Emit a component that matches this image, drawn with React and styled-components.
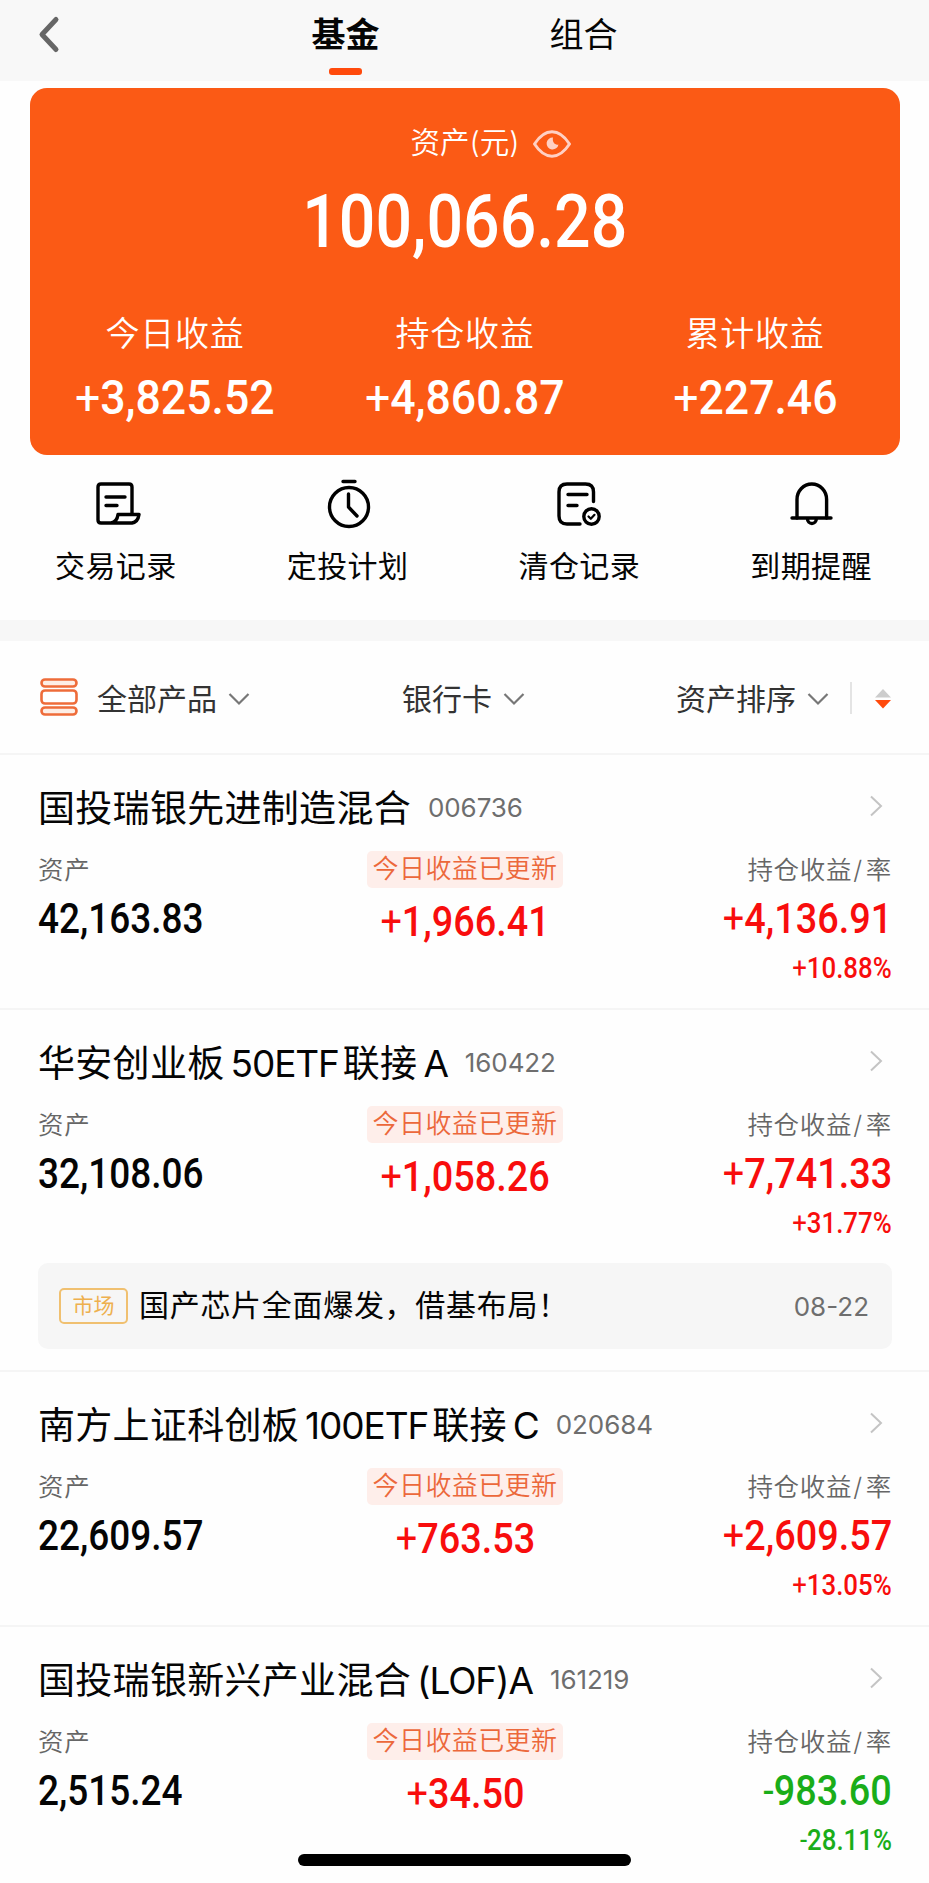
import React from 'react';
import styled, { createGlobalStyle } from 'styled-components';

const colors = {
  orange: '#fb5a15',
  accent: '#ff4a0c',
  red: '#f80d0d',
  green: '#1aad19',
  black: '#050505',
  dark: '#333',
  grey: '#6e6e6e',
  line: '#f5f5f5',
  panel: '#f7f7f7',
};

const textFont = `Inter, 'Noto Sans CJK SC', sans-serif`;
const numFont = `Roboto, 'Noto Sans CJK SC', sans-serif`;

const GlobalStyle = createGlobalStyle`
  * {
    box-sizing: border-box;
  }

  body {
    margin: 0;
    background: #fff;
    font-family: ${textFont};
    color: ${colors.black};
  }
`;

const Screen = styled.div`
  position: relative;
  width: 929px;
  height: 1883px;
  overflow: hidden;
  background: #fefefe;
`;

const NavBar = styled.header`
  display: grid;
  grid-template-columns: 226px 239px 237px;
  height: 81px;
  background: #f8f8f8;
`;

const BackIcon = styled.svg`
  width: 26px;
  height: 40px;
  margin: 14px 0 0 36px;
`;

const Tab = styled.div`
  display: flex;
  flex-direction: column;
  align-items: center;
  padding-top: 10px;
  font-size: 34px;
  line-height: 50px;
  font-weight: ${props => (props.$active ? 700 : 400)};

  &::after {
    content: '';
    width: 33px;
    height: 7px;
    margin-top: 8px;
    border-radius: 3px;
    background: ${props => (props.$active ? colors.accent : 'transparent')};
  }
`;

const AssetCard = styled.section`
  height: 367px;
  margin: 7px 29px 0 30px;
  padding-top: 35px;
  border-radius: 17px;
  background: ${colors.orange};
  color: #fff;
`;

const AssetLabel = styled.div`
  display: flex;
  align-items: center;
  justify-content: center;
  gap: 12px;
  height: 40px;
  padding-left: 52px;
  font-size: 29.5px;
  line-height: 38px;
  font-weight: 350;

  span {
    padding-bottom: 3px;
  }

  svg {
    margin-top: 2px;
  }
`;

/* Squeezed figures, close to the DIN face used for money amounts */
const Num = styled.div`
  width: max-content;
  font-family: ${numFont};
  font-size: ${props => props.$size}px;
  font-weight: 500;
  line-height: ${props => props.$line}px;
  white-space: nowrap;
  color: ${props => props.$color || 'inherit'};
  transform: scaleX(${props => props.$squeeze || 0.89});
  transform-origin: ${props => props.$origin || 'center'};
`;

const Sign = styled.span`
  font-weight: 400;
`;

const Total = styled.div`
  display: flex;
  justify-content: center;
  margin-top: 15px;
`;

const Stats = styled.div`
  display: grid;
  grid-template-columns: repeat(3, 1fr);
  margin-top: 43px;
`;

const Stat = styled.div`
  display: flex;
  flex-direction: column;
  align-items: center;
`;

const StatLabel = styled.div`
  font-size: 34px;
  font-weight: 350;
  line-height: 50px;
  letter-spacing: 0.8px;
`;

const Actions = styled.nav`
  display: grid;
  grid-template-columns: repeat(4, 1fr);
  height: 165px;
  padding: 21px 2px 0 0;
`;

const Action = styled.div`
  display: flex;
  flex-direction: column;
  align-items: center;
  font-size: 30px;
  line-height: 44px;
  letter-spacing: 0.4px;

  svg {
    width: 54px;
    height: 56px;
    margin-bottom: 12px;
  }
`;

const Gap = styled.div`
  height: 21px;
  background: ${colors.panel};
`;

const Filters = styled.div`
  display: flex;
  align-items: center;
  height: 112px;
  padding: 3px 37px 0 38px;
`;

const Filter = styled.div`
  display: flex;
  flex-shrink: 0;
  align-items: center;
  margin-left: ${props => props.$left || 0}px;
  font-size: 30px;
  line-height: 44px;
  white-space: nowrap;
  color: ${colors.dark};
`;

const ProductIcon = styled.svg`
  width: 42px;
  height: 42px;
  margin: -3px 17px 0 0;
`;

const Down = styled.svg`
  width: 24px;
  height: 16px;
  margin: 0 0 0 10px;
`;

const Divider = styled.div`
  width: 2px;
  height: 32px;
  margin: -2px 22px 0 20px;
  background: #e4e4e4;
`;

const Sort = styled.svg`
  width: 18px;
  height: 22px;
`;

const Fund = styled.article`
  height: ${props => (props.$tall ? 362 : 255)}px;
  padding: 24px 37px 0 38px;
  border-top: 2px solid ${colors.line};
`;

const FundHead = styled.div`
  display: flex;
  align-items: center;
  height: 56px;
`;

const FundName = styled.h2`
  margin: 0;
  padding-bottom: 2px;
  font-size: 37px;
  font-weight: 400;
  letter-spacing: 0.3px;
`;

const Latin = styled.span`
  margin: 0 4px 0 6px;
  letter-spacing: -1.1px;

  &:last-child {
    margin-right: 0;
  }
`;

const FundCode = styled.span`
  flex: 1;
  margin-left: 17px;
  font-size: 26px;
  letter-spacing: -0.1px;
  color: ${colors.grey};
`;

const Right = styled.svg`
  width: 16px;
  height: 24px;
  margin: -2px 8px 0 0;
`;

const FundBody = styled.div`
  display: grid;
  grid-template-columns: 1fr 200px 1fr;
  padding-top: 15px;
`;

const Column = styled.div`
  display: flex;
  flex-direction: column;
  align-items: ${props => props.$align};
`;

const Label = styled.div`
  height: 44px;
  font-size: 25.5px;
  font-weight: 350;
  line-height: 40px;
  letter-spacing: 0.7px;
  color: #666;
`;

const Slash = styled.span`
  margin: 0 3px 0 1px;
`;

const Updated = styled.div`
  height: 37px;
  margin: 1px 0 9px;
  padding: 0 6px;
  border-radius: 5px;
  background: #feeeea;
  color: #ec683b;
  font-size: 26px;
  font-weight: 350;
  line-height: 36px;
  letter-spacing: 0.4px;
`;

const News = styled.div`
  display: flex;
  align-items: center;
  height: 86px;
  margin-top: 16px;
  padding: 0 23px 0 21px;
  border-radius: 10px;
  background: #f6f6f6;
`;

const NewsTag = styled.span`
  width: 69px;
  height: 36px;
  border: 2px solid #f0c070;
  border-radius: 5px;
  color: #eeb04e;
  font-size: 21px;
  line-height: 32px;
  text-align: center;
`;

const NewsTitle = styled.span`
  flex: 1;
  margin-left: 11px;
  padding-bottom: 6px;
  font-size: 30px;
  letter-spacing: 0.7px;
`;

const NewsDate = styled.span`
  font-size: 26px;
  color: ${colors.grey};
`;

const HomeBar = styled.div`
  position: absolute;
  left: 298px;
  bottom: 17px;
  width: 333px;
  height: 12px;
  border-radius: 6px;
  background: #000;
`;

const IconEye = () => (
  <svg width="40" height="30" viewBox="0 0 40 30" fill="none" stroke="#ffd0c4" strokeWidth="3">
    <path d="M2.500 15C8 6.500 13.500 2.800 20 2.800S32 6.500 37.500 15C32 23.500 26.500 27.200 20 27.200S8 23.500 2.500 15Z" strokeLinejoin="round" />
    <path d="M21 8.500A6 6 0 1 0 26.500 15.500C23 16.500 20 13 21 8.500Z" fill="#ffd0c4" stroke="none" />
  </svg>
);

const IconRecord = () => (
  <svg viewBox="0 0 54 56" fill="none" stroke="#000" strokeWidth="3.400" strokeLinecap="round" strokeLinejoin="round">
    <path d="M43 38V11q0-3-3-3H12q-3 0-3 3v33q0 3 3 3h31q6-1 7-8.500H29q-1 7.500-7 8.500" />
    <path d="M17 21h19M17 29.500h11" />
  </svg>
);

const IconTimer = () => (
  <svg viewBox="0 0 54 56" fill="none" stroke="#000" strokeWidth="3.400" strokeLinecap="round" strokeLinejoin="round">
    <circle cx="28" cy="31" r="19.500" />
    <path d="M22 5.500h12M27.500 18v13l8.500 9" />
  </svg>
);

const IconCleared = () => (
  <svg viewBox="0 0 54 56" fill="none" stroke="#000" strokeWidth="3.400" strokeLinecap="round" strokeLinejoin="round">
    <path d="M41.500 25.500V16q0-8-8-8H15q-8 0-8 8v24q0 8 8 8h13" />
    <path d="M16 18.500h19M16 29.500h9" />
    <circle cx="39.500" cy="40.500" r="7.700" />
    <path d="M36.500 40.500l2.300 2.300 3.700-4" strokeWidth="2.200" />
  </svg>
);

const IconBell = () => (
  <svg viewBox="0 0 54 56" fill="none" stroke="#000" strokeWidth="3.400" strokeLinecap="round" strokeLinejoin="round">
    <path d="M13 42V23.500a14.800 15.500 0 0 1 29.600 0V42" />
    <path d="M8 42h39M23.500 43a4.400 4.500 0 0 0 8.800 0" />
  </svg>
);

const IconDown = () => (
  <Down viewBox="0 0 24 16" fill="none" stroke="#777" strokeWidth="2.200">
    <path d="M2.500 3L12 12.500 21.500 3" />
  </Down>
);

const stats = [
  { label: '今日收益', value: '+3,825.52' },
  { label: '持仓收益', value: '+4,860.87' },
  { label: '累计收益', value: '+227.46' },
];

const actions = [
  { label: '交易记录', Icon: IconRecord },
  { label: '定投计划', Icon: IconTimer },
  { label: '清仓记录', Icon: IconCleared },
  { label: '到期提醒', Icon: IconBell },
];

const funds = [
  {
    name: '国投瑞银先进制造混合',
    code: '006736',
    asset: '42,163.83',
    today: '+1,966.41',
    profit: '+4,136.91',
    rate: '+10.88%',
  },
  {
    name: '华安创业板50ETF联接A',
    code: '160422',
    asset: '32,108.06',
    today: '+1,058.26',
    profit: '+7,741.33',
    rate: '+31.77%',
    news: { tag: '市场', title: '国产芯片全面爆发，借基布局！', date: '08-22' },
  },
  {
    name: '南方上证科创板100ETF联接C',
    code: '020684',
    asset: '22,609.57',
    today: '+763.53',
    profit: '+2,609.57',
    rate: '+13.05%',
  },
  {
    name: '国投瑞银新兴产业混合(LOF)A',
    code: '161219',
    asset: '2,515.24',
    today: '+34.50',
    profit: '-983.60',
    rate: '-28.11%',
  },
];

// latin runs get their own tracking and side gaps
const splitName = name =>
  name.split(/([\w()]+)/).map((part, i) => (i % 2 ? <Latin key={i}>{part}</Latin> : part));

const Change = ({ value, white, ...rest }) => (
  <Num $color={white ? '#fff' : value.startsWith('-') ? colors.green : colors.red} {...rest}>
    <Sign>{value[0]}</Sign>
    {value.slice(1)}
  </Num>
);

const FundItem = ({ fund }) => (
  <Fund $tall={Boolean(fund.news)}>
    <FundHead>
      <FundName>{splitName(fund.name)}</FundName>
      <FundCode>{fund.code}</FundCode>
      <Right viewBox="0 0 16 24" fill="none" stroke="#c4c4c4" strokeWidth="2">
        <path d="M3 2.500L13 12 3 21.500" />
      </Right>
    </FundHead>
    <FundBody>
      <Column $align="flex-start">
        <Label>资产</Label>
        <Num $size={42} $line={50} $origin="left" $squeeze={0.88}>{fund.asset}</Num>
      </Column>
      <Column $align="center">
        <Updated>今日收益已更新</Updated>
        <Change $size={42} $line={50} $squeeze={0.9} value={fund.today} />
      </Column>
      <Column $align="flex-end">
        <Label>持仓收益<Slash>/</Slash>率</Label>
        <Change $size={42} $line={50} $origin="right" $squeeze={0.9} value={fund.profit} />
        <Change $size={30} $line={48} $origin="right" $squeeze={0.86} value={fund.rate} />
      </Column>
    </FundBody>
    {fund.news && (
      <News>
        <NewsTag>{fund.news.tag}</NewsTag>
        <NewsTitle>{fund.news.title}</NewsTitle>
        <NewsDate>{fund.news.date}</NewsDate>
      </News>
    )}
  </Fund>
);

const App = () => (
  <Screen>
    <GlobalStyle />

    <NavBar>
      <BackIcon viewBox="0 0 26 40" fill="none" stroke="#666" strokeWidth="5" strokeLinecap="round" strokeLinejoin="round">
        <path d="M20 5.500L6 20.500 20 35.500" />
      </BackIcon>
      <Tab $active>基金</Tab>
      <Tab>组合</Tab>
    </NavBar>

    <AssetCard>
      <AssetLabel>
        <span>资产(元)</span>
        <IconEye />
      </AssetLabel>
      <Total>
        <Num $size={74} $line={88} $squeeze={0.87}>100,066.28</Num>
      </Total>
      <Stats>
        {stats.map(({ label, value }) => (
          <Stat key={label}>
            <StatLabel>{label}</StatLabel>
            <Change white $size={49} $line={78} $squeeze={0.91} value={value} />
          </Stat>
        ))}
      </Stats>
    </AssetCard>

    <Actions>
      {actions.map(({ label, Icon }) => (
        <Action key={label}>
          <Icon />
          {label}
        </Action>
      ))}
    </Actions>

    <Gap />

    <Filters>
      <ProductIcon viewBox="0 0 42 42" fill="#fdeee6" stroke="#ee6c3a" strokeWidth="2.600">
        <rect x="3.500" y="3.500" width="35" height="7" rx="3.500" />
        <rect x="3.500" y="14.500" width="35" height="13" rx="3.500" fill="#fff" />
        <rect x="3.500" y="31.500" width="35" height="7" rx="3.500" />
      </ProductIcon>
      <Filter>全部产品<IconDown /></Filter>
      <Filter $left={151}>银行卡<IconDown /></Filter>
      <Filter $left={150}>资产排序<IconDown /></Filter>
      <Divider />
      <Sort viewBox="0 0 18 22">
        <path d="M9 1L17 9.500H1Z" fill="#ccc" />
        <path d="M9 20.500L17 12H1Z" fill={colors.accent} />
      </Sort>
    </Filters>

    {funds.map(fund => (
      <FundItem key={fund.code} fund={fund} />
    ))}

    <HomeBar />
  </Screen>
);

export default App;
